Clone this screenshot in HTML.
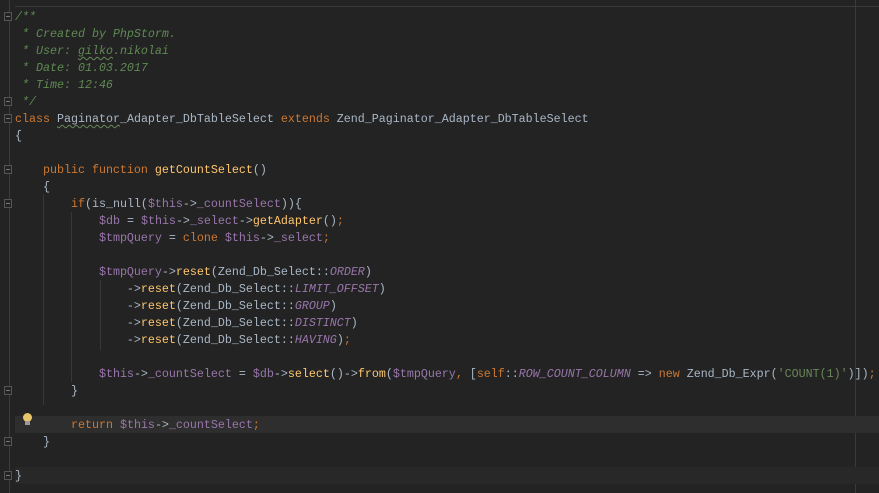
<!DOCTYPE html><html><head><style>
body{margin:0;width:879px;height:493px;background:#232323;overflow:hidden;position:relative;font-family:"Liberation Mono",monospace;font-size:11.67px;color:#a9b7c6}
.l{position:absolute;left:15px;height:17px;line-height:17px;white-space:pre;margin-top:1px}
.c{color:#5f8a53;font-style:italic}.k{color:#cc7832}.v{color:#9876aa}.f{color:#ffc66d}.i{color:#9876aa;font-style:italic}.s{color:#6a8759}
.u{text-decoration:underline wavy #6a8759;text-underline-offset:2px;text-decoration-thickness:1px}
.fold{position:absolute;left:4px;width:8px;height:9px;border:1px solid #555;box-sizing:border-box;background:#232323}
.fold::after{content:"";position:absolute;left:1px;top:3px;width:4px;height:1px;background:#777}
.g{position:absolute;width:1px;background:#373737}
</style></head><body>
<div style="position:absolute;left:15px;top:6px;width:864px;height:1px;background:#3a3a3a"></div>
<div style="position:absolute;left:9px;top:0;width:1px;height:493px;background:#3c3c3c"></div>
<div style="position:absolute;left:855px;top:0;width:1px;height:493px;background:#3a3a3a"></div>
<div style="position:absolute;left:15px;top:416px;width:864px;height:17px;background:#2e2e2e"></div>
<div style="position:absolute;left:15px;top:467px;width:864px;height:17px;background:#282828"></div>
<div class="g" style="left:43px;top:195px;height:210px"></div>
<div class="g" style="left:71px;top:212px;height:170px"></div>
<div class="g" style="left:100px;top:280px;height:70px"></div>
<div class="fold" style="top:12px"></div><div class="fold" style="top:97px"></div><div class="fold" style="top:114px"></div>
<div class="fold" style="top:165px"></div><div class="fold" style="top:199px"></div><div class="fold" style="top:386px"></div>
<div class="fold" style="top:437px"></div><div class="fold" style="top:471px"></div>
<div style="position:absolute;left:23px;top:413px;width:9px;height:9px;border-radius:50%;background:#e8c46a"></div>
<div style="position:absolute;left:25px;top:421px;width:5px;height:4px;background:#999"></div>
<div class="l c" style="top:8px">/**</div>
<div class="l c" style="top:25px"> * Created by PhpStorm.</div>
<div class="l c" style="top:42px"> * User: <span class="u">gilko</span>.nikolai</div>
<div class="l c" style="top:59px"> * Date: 01.03.2017</div>
<div class="l c" style="top:76px"> * Time: 12:46</div>
<div class="l c" style="top:93px"> */</div>
<div class="l" style="top:110px"><span class="k">class</span> <span class="u">Paginator</span>_Adapter_DbTableSelect <span class="k">extends</span> Zend_Paginator_Adapter_DbTableSelect</div>
<div class="l" style="top:127px">{</div>
<div class="l" style="top:161px">    <span class="k">public function</span> <span class="f">getCountSelect</span>()</div>
<div class="l" style="top:178px">    {</div>
<div class="l" style="top:195px">        <span class="k">if</span>(is_null(<span class="v">$this</span>-><span class="v">_countSelect</span>)){</div>
<div class="l" style="top:212px">            <span class="v">$db</span> = <span class="v">$this</span>-><span class="v">_select</span>-><span class="f">getAdapter</span>()<span class="k">;</span></div>
<div class="l" style="top:229px">            <span class="v">$tmpQuery</span> = <span class="k">clone</span> <span class="v">$this</span>-><span class="v">_select</span><span class="k">;</span></div>
<div class="l" style="top:263px">            <span class="v">$tmpQuery</span>-><span class="f">reset</span>(Zend_Db_Select::<span class="i">ORDER</span>)</div>
<div class="l" style="top:280px">                -><span class="f">reset</span>(Zend_Db_Select::<span class="i">LIMIT_OFFSET</span>)</div>
<div class="l" style="top:297px">                -><span class="f">reset</span>(Zend_Db_Select::<span class="i">GROUP</span>)</div>
<div class="l" style="top:314px">                -><span class="f">reset</span>(Zend_Db_Select::<span class="i">DISTINCT</span>)</div>
<div class="l" style="top:331px">                -><span class="f">reset</span>(Zend_Db_Select::<span class="i">HAVING</span>)<span class="k">;</span></div>
<div class="l" style="top:365px">            <span class="v">$this</span>-><span class="v">_countSelect</span> = <span class="v">$db</span>-><span class="f">select</span>()-><span class="f">from</span>(<span class="v">$tmpQuery</span><span class="k">,</span> [<span class="k">self</span>::<span class="i">ROW_COUNT_COLUMN</span> => <span class="k">new</span> Zend_Db_Expr(<span class="s">'COUNT(1)'</span>)])<span class="k">;</span></div>
<div class="l" style="top:382px">        }</div>
<div class="l" style="top:416px">        <span class="k">return</span> <span class="v">$this</span>-><span class="v">_countSelect</span><span class="k">;</span></div>
<div class="l" style="top:433px">    }</div>
<div class="l" style="top:467px">}</div>
</body></html>
